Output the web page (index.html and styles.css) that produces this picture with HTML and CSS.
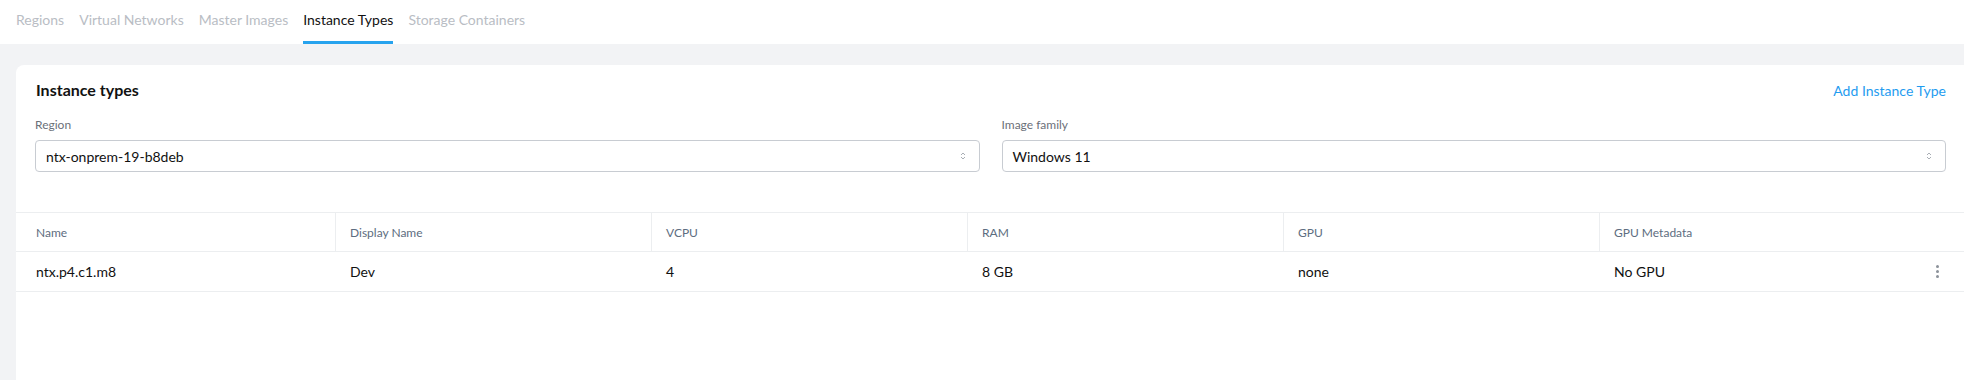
FILE: index.html
```html
<!DOCTYPE html>
<html lang="en">
<head>
    <meta charset="UTF-8">
    <meta name="viewport" content="width=device-width, initial-scale=1.0">
    <title>Instance Types</title>
    <link rel="stylesheet" href="styles.css">
</head>
<body>
    <nav class="tabs">
        <a class="tab" href="#">Regions</a>
        <a class="tab" href="#">Virtual Networks</a>
        <a class="tab" href="#">Master Images</a>
        <a class="tab active" href="#">Instance Types</a>
        <a class="tab" href="#">Storage Containers</a>
    </nav>

    <main class="page">
        <section class="card">
            <div class="card-head">
                <h2>Instance types</h2>
                <a class="add-link" href="#">Add Instance Type</a>
            </div>

            <div class="filters">
                <div class="field">
                    <label>Region</label>
                    <div class="select">
                        <span>ntx-onprem-19-b8deb</span>
                        <svg class="arrows" width="6" height="10" viewBox="0 0 6 10">
                            <path d="M1 4 L3 2 L5 4" />
                            <path d="M1 6 L3 8 L5 6" />
                        </svg>
                    </div>
                </div>
                <div class="field">
                    <label>Image family</label>
                    <div class="select">
                        <span>Windows 11</span>
                        <svg class="arrows" width="6" height="10" viewBox="0 0 6 10">
                            <path d="M1 4 L3 2 L5 4" />
                            <path d="M1 6 L3 8 L5 6" />
                        </svg>
                    </div>
                </div>
            </div>

            <div class="table">
                <div class="th first">Name</div>
                <div class="th">Display Name</div>
                <div class="th">VCPU</div>
                <div class="th">RAM</div>
                <div class="th">GPU</div>
                <div class="th no-line">GPU Metadata</div>
                <div class="th no-line"></div>

                <div class="td first">ntx.p4.c1.m8</div>
                <div class="td">Dev</div>
                <div class="td">4</div>
                <div class="td">8 GB</div>
                <div class="td">none</div>
                <div class="td">No GPU</div>
                <div class="td actions">
                    <span class="kebab"><i></i><i></i><i></i></span>
                </div>
            </div>
        </section>
    </main>
</body>
</html>
```

FILE: styles.css
```css
body {
    margin: 0;
    height: 380px;
    overflow: hidden;
    background-color: #f2f3f5;
    font-family: Lato, "Liberation Sans", sans-serif;
    color: #111;
}

.tabs {
    display: flex;
    gap: 15px;
    height: 44px;
    padding-left: 16px;
    background: white;
}

.tab {
    padding: 11px 0 12px;
    line-height: 18px;
    font-size: 14px;
    color: #b9bdc4;
    text-decoration: none;
    border-bottom: 3px solid transparent;
}

.tab.active {
    color: #111;
    border-bottom-color: #27a3ee;
}

.page {
    padding: 21px 0 0 16px;
}

.card {
    background: white;
    border-radius: 8px 0 0 0;
    height: 320px;
}

.card-head {
    display: flex;
    justify-content: space-between;
    align-items: center;
    padding: 15px 18px 0 20px;
}

.card-head h2 {
    margin: 0;
    font-size: 16px;
    line-height: 20px;
    font-weight: bold;
}

.add-link {
    font-size: 14px;
    color: #1f9cf0;
    text-decoration: none;
}

.filters {
    display: grid;
    grid-template-columns: 1fr 1fr;
    gap: 22px;
    padding: 17px 18px 0 19px;
}

.field label {
    display: block;
    font-size: 12px;
    line-height: 16px;
    color: #6b7079;
    margin-bottom: 7px;
}

.select {
    display: flex;
    align-items: center;
    justify-content: space-between;
    height: 30px;
    padding: 0 13px 0 10px;
    border: 1px solid #c8ccd2;
    border-radius: 4px;
    font-size: 14px;
}

.arrows path {
    fill: none;
    stroke: #a9aeb5;
    stroke-width: 1;
}

.table {
    display: grid;
    grid-template-columns: 320px repeat(5, 316px) 1fr;
    margin-top: 40px;
    border-top: 1px solid #eceef0;
}

.th {
    height: 38px;
    display: flex;
    align-items: center;
    padding-left: 14px;
    font-size: 12px;
    color: #5d6d80;
    border-right: 1px solid #eceef0;
    border-bottom: 1px solid #eceef0;
}

.th.first,
.td.first {
    padding-left: 20px;
}

.th.no-line {
    border-right: none;
}

.td {
    height: 39px;
    display: flex;
    align-items: center;
    padding-left: 14px;
    font-size: 14px;
    border-bottom: 1px solid #eceef0;
}

.td.actions {
    padding-left: 20px;
}

.kebab {
    display: flex;
    flex-direction: column;
    gap: 2px;
}

.kebab i {
    width: 3px;
    height: 3px;
    border-radius: 50%;
    background: #8c929a;
}
```
